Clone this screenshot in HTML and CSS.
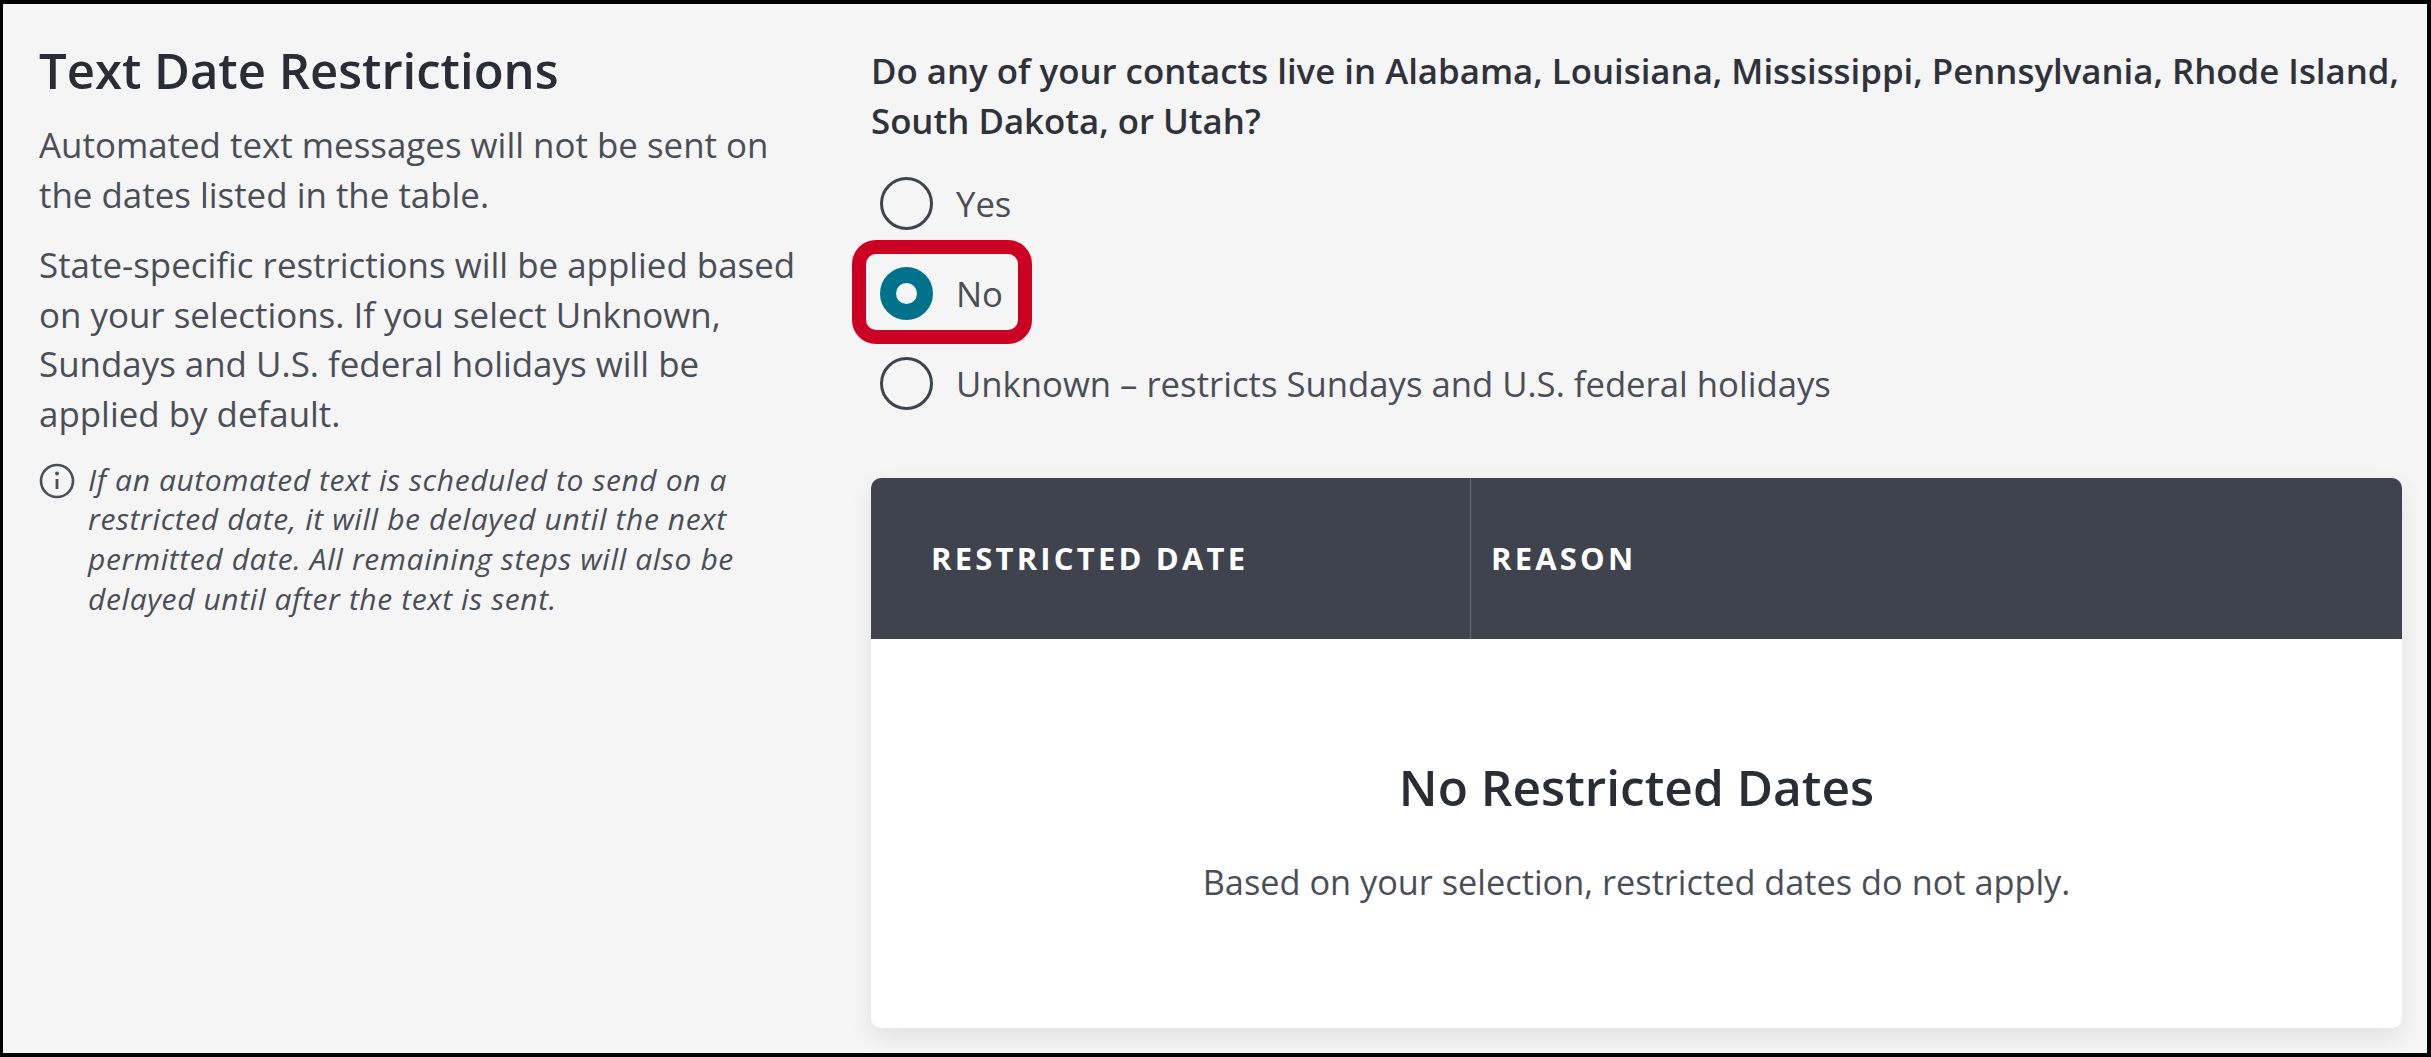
FILE: index.html
```html
<!DOCTYPE html>
<html>
<head>
  <meta charset="UTF-8">
  <title>Text Date Restrictions</title>
  <link rel="stylesheet" href="styles.css">
</head>
<body>
  <div class="frame">
    <div class="intro">
      <h1>Text Date Restrictions</h1>
      <p>Automated text messages will not be sent on<br>the dates listed in the table.</p>
      <p>State-specific restrictions will be applied based<br>on your selections. If you select Unknown,<br>Sundays and U.S. federal holidays will be<br>applied by default.</p>
      <div class="note">
        <svg class="note-icon" viewBox="0 0 36 36" fill="none" stroke="#4a4e58" stroke-width="2.6">
          <circle cx="18" cy="18" r="16"/>
          <path d="M18 16v10" stroke-width="2.8"/>
          <circle cx="18" cy="10.5" r="1.9" fill="#4a4e58" stroke="none"/>
        </svg>
        <em>If an automated text is scheduled to send on a<br>restricted date, it will be delayed until the next<br>permitted date. All remaining steps will also be<br>delayed until after the text is sent.</em>
      </div>
    </div>
    <div class="settings">
      <div class="question">Do any of your contacts live in Alabama, Louisiana, Mississippi, Pennsylvania, Rhode Island,<br>South Dakota, or Utah?</div>
      <div class="options">
        <div class="option"><span class="radio"></span>Yes</div>
        <div class="option"><span class="radio checked"></span>No<span class="callout"></span></div>
        <div class="option"><span class="radio"></span>Unknown – restricts Sundays and U.S. federal holidays</div>
      </div>
      <div class="card">
        <div class="card-head">
          <div class="col-date">RESTRICTED DATE</div>
          <div class="col-reason">REASON</div>
        </div>
        <div class="card-empty">
          <h2>No Restricted Dates</h2>
          <p>Based on your selection, restricted dates do not apply.</p>
        </div>
      </div>
    </div>
  </div>
</body>
</html>
```

FILE: styles.css
```css
* {
  box-sizing: border-box;
}

body {
  margin: 0;
  font-family: "Open Sans", "Noto Sans", sans-serif;
  color: #4a4e58;
}

.frame {
  width: 2431px;
  height: 1057px;
  display: flex;
  background-color: #f5f5f5;
  border: solid #000;
  border-width: 4px 4px 4px 3px;
  padding: 0 0 0 36px;
  overflow: hidden;
}

/* left column */
.intro {
  width: 832px;
  flex: none;
  padding-top: 36px;
}

h1 {
  margin: 0 0 20px;
  font-size: 49px;
  line-height: 60px;
  font-weight: 600;
  color: #2a2d36;
}

.intro p {
  margin: 0 0 21px;
  font-size: 34.9px;
  line-height: 49.6px;
}

.note {
  display: flex;
  gap: 13px;
  font-size: 30px;
  line-height: 39.7px;
  letter-spacing: 0.6px;
}

.note-icon {
  width: 36px;
  height: 36px;
  flex: none;
  margin-top: 3px;
}

/* right column */
.settings {
  width: 1531px;
  flex: none;
  padding-top: 42px;
}

.question {
  font-size: 34.8px;
  line-height: 50px;
  font-weight: 600;
  color: #2f323b;
  white-space: nowrap;
}

.options {
  margin-top: 12px;
}

.option {
  position: relative;
  height: 90px;
  display: flex;
  align-items: center;
  gap: 23px;
  padding-left: 9px;
  font-size: 34.7px;
}

.radio {
  width: 53px;
  height: 53px;
  flex: none;
  border: 3px solid #3f434d;
  border-radius: 50%;
}

.radio.checked {
  border: 16px solid #00728c;
}

.callout {
  position: absolute;
  left: -19px;
  top: -8px;
  width: 180px;
  height: 104px;
  border: 14px solid #cc0022;
  border-radius: 24px;
}

.card {
  margin-top: 50px;
  width: 1531px;
  height: 550px;
  background-color: #fff;
  border-radius: 10px;
  box-shadow: 0 10px 24px rgba(0, 0, 0, 0.08);
  overflow: hidden;
}

.card-head {
  height: 161px;
  display: flex;
  align-items: center;
  padding-bottom: 2px;
  background-color: #3f434d;
  color: #fff;
  font-size: 31px;
  font-weight: 700;
  letter-spacing: 3.2px;
}

.col-date {
  width: 599px;
  height: 159px;
  display: flex;
  align-items: center;
  padding-left: 60px;
}

.col-reason {
  align-self: stretch;
  display: flex;
  align-items: center;
  margin-bottom: -2px;
  padding: 0 0 2px 20px;
  border-left: 1px solid #6a6e78;
}

.card-empty {
  text-align: center;
  padding-top: 118px;
}

.card-empty h2 {
  margin: 0 0 40px;
  font-size: 49.6px;
  line-height: 60px;
  font-weight: 600;
  color: #2a2d36;
}

.card-empty p {
  margin: 0;
  font-size: 34.3px;
  line-height: 50px;
}
```
